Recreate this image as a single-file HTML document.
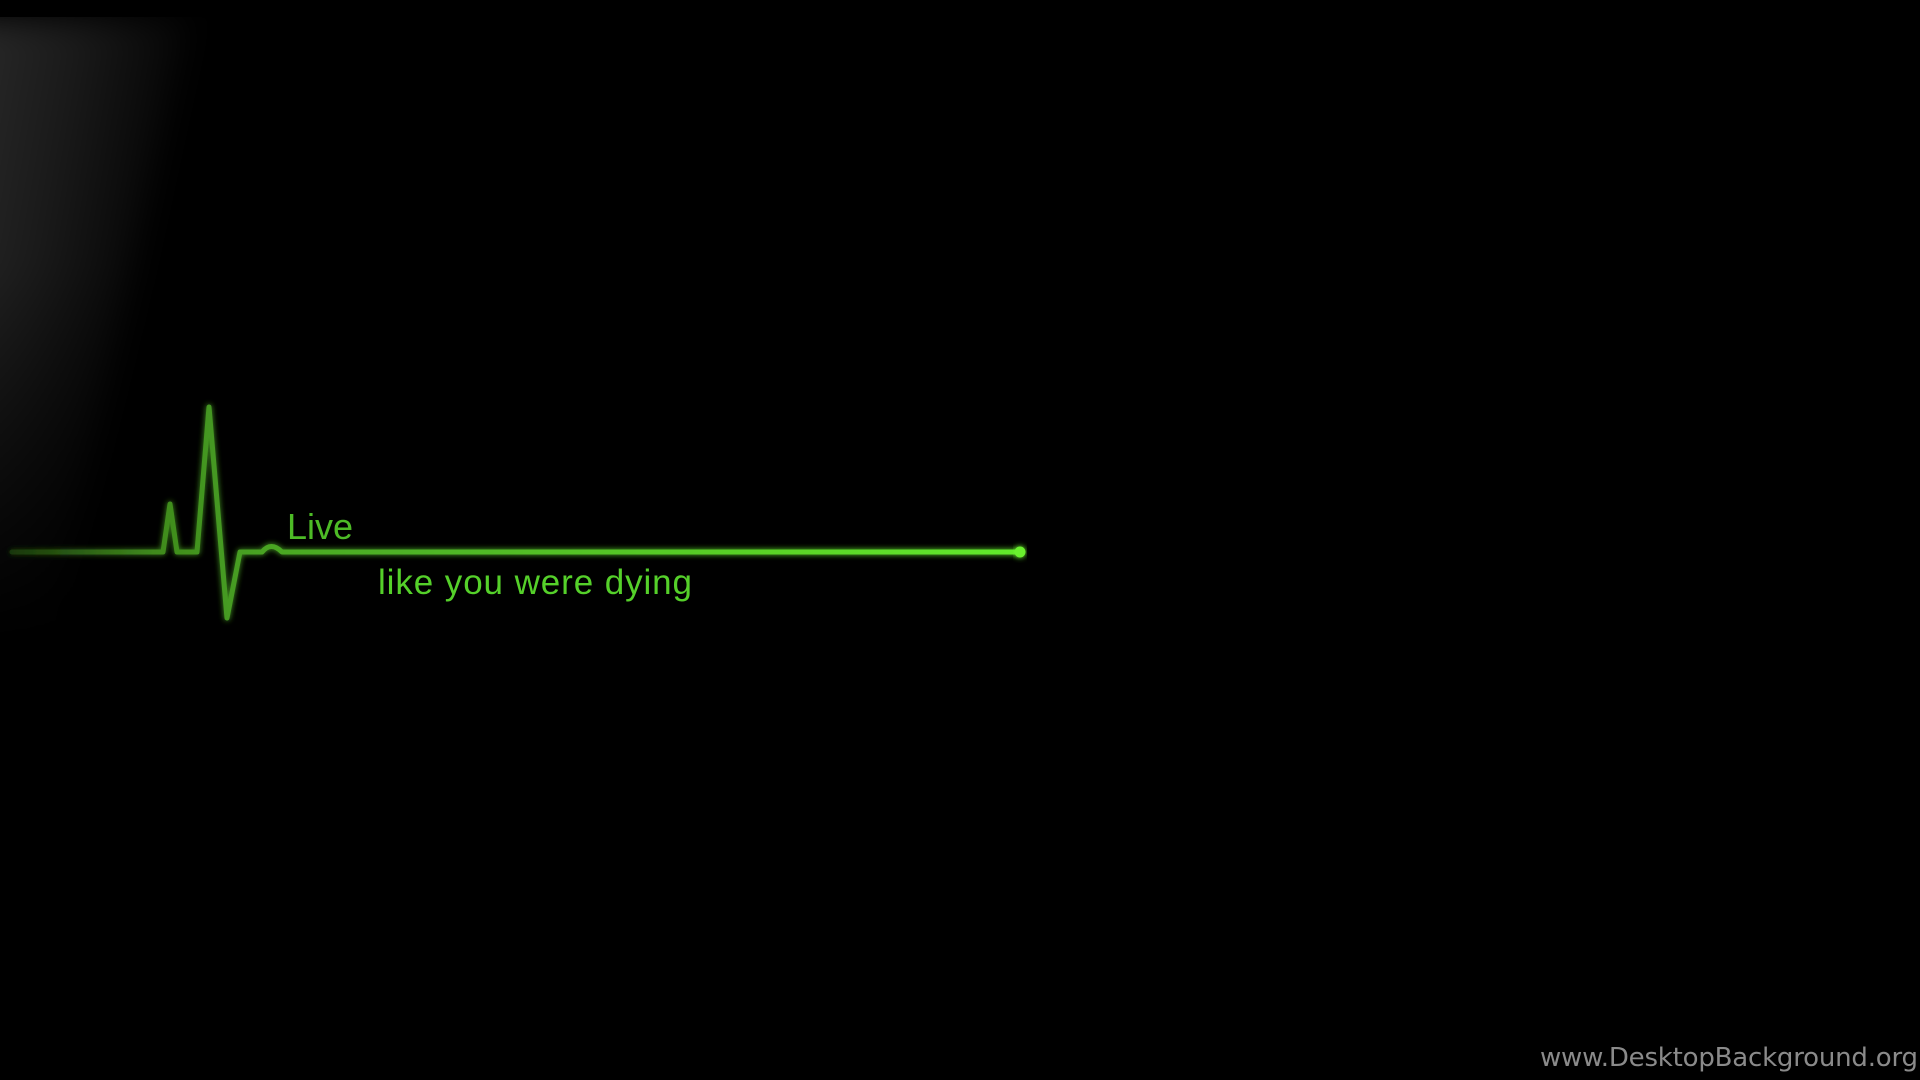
<!DOCTYPE html>
<html><head><meta charset="utf-8"><style>
html,body{margin:0;padding:0;background:#000;width:1920px;height:1080px;overflow:hidden}
svg{display:block;position:absolute;left:0;top:0}
#pw{position:absolute;left:-40px;top:18px;width:230px;height:620px;filter:blur(16px)}
#patch{width:100%;height:100%;
background:linear-gradient(100deg,#2b2b2b 0%,#1a1a1a 35%,#070707 65%,#000 85%);
clip-path:polygon(0 0,100% 0,40% 100%,0 100%);
-webkit-mask-image:linear-gradient(180deg,#000 0%,#000 40%,transparent 100%);mask-image:linear-gradient(180deg,#000 0%,#000 40%,transparent 100%)}
#topcut{position:absolute;left:0;top:0;width:240px;height:17px;background:#000}
text{font-family:"Liberation Sans",Arial,sans-serif}
</style></head><body>
<div id="pw"><div id="patch"></div></div><div id="topcut"></div>
<svg width="1920" height="1080" viewBox="0 0 1920 1080" xmlns="http://www.w3.org/2000/svg">
<defs>
<filter id="glow" x="-10%" y="-50%" width="120%" height="200%"><feGaussianBlur stdDeviation="3" result="b"/><feMerge><feMergeNode in="b"/><feMergeNode in="SourceGraphic"/></feMerge></filter>
<linearGradient id="lg" gradientUnits="userSpaceOnUse" x1="0" y1="0" x2="1020" y2="0">
<stop offset="0" stop-color="#16300a"/><stop offset="0.15" stop-color="#3f8a1d"/><stop offset="0.28" stop-color="#4aa824"/><stop offset="1" stop-color="#62ea2a"/>
</linearGradient>
</defs>
<g filter="url(#glow)" fill="none" stroke="url(#lg)" stroke-width="5" stroke-linejoin="round" stroke-linecap="round">
<path d="M12,552 L163,552 L170,504 L177,552 L197,552 L209,407 L227,618 L240,552 L262,552 Q271,541 282,552 L1020,552"/>
</g>
<circle cx="1020" cy="552" r="5.5" fill="#6bf02e" filter="url(#glow)"/>
<text x="287" y="539" font-size="36" fill="#4dbb26">Live</text>
<text x="378" y="594" font-size="35" fill="#55d02a" textLength="314">like you were dying</text>
<text x="1540" y="1066" style="font-family:'DejaVu Sans',sans-serif" font-size="26" fill="#8a8a8a" textLength="378">www.DesktopBackground.org</text>
</svg>
</body></html>
